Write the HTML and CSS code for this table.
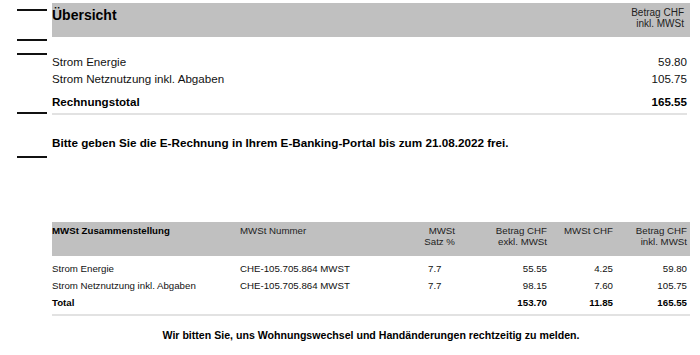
FILE: index.html
```html
<!DOCTYPE html>
<html lang="de">
<head>
<meta charset="utf-8">
<title>Übersicht</title>
<link rel="stylesheet" href="styles.css">
</head>
<body>
<div class="page">
  <div class="marks">
    <span class="mark m1"></span>
    <span class="mark m2"></span>
    <span class="mark m3"></span>
    <span class="mark m4"></span>
    <span class="mark m5"></span>
  </div>
  <main class="content">
    <section class="summary">
      <div class="summary-head">
        <h1 class="summary-title">Übersicht</h1>
        <div class="summary-col">Betrag CHF<br>inkl. MWSt</div>
      </div>
      <div class="summary-body">
        <div class="s-label">Strom Energie</div><div class="s-val">59.80</div>
        <div class="s-label">Strom Netznutzung inkl. Abgaben</div><div class="s-val">105.75</div>
        <div class="s-label s-total">Rechnungstotal</div><div class="s-val s-total">165.55</div>
      </div>
    </section>

    <p class="notice">Bitte geben Sie die E-Rechnung in Ihrem E-Banking-Portal bis zum 21.08.2022 frei.</p>

    <section class="vat">
      <div class="vat-head">
        <div class="c1 bold">MWSt Zusammenstellung</div>
        <div class="c2">MWSt Nummer</div>
        <div class="c3h">MWSt<br>Satz %</div>
        <div class="cr">Betrag CHF<br>exkl. MWSt</div>
        <div class="cr">MWSt CHF</div>
        <div class="cr">Betrag CHF<br>inkl. MWSt</div>
      </div>
      <div class="vat-body">
        <div class="c1">Strom Energie</div>
        <div class="c2">CHE-105.705.864 MWST</div>
        <div class="c3">7.7</div>
        <div class="cr">55.55</div>
        <div class="cr">4.25</div>
        <div class="cr">59.80</div>

        <div class="c1">Strom Netznutzung inkl. Abgaben</div>
        <div class="c2">CHE-105.705.864 MWST</div>
        <div class="c3">7.7</div>
        <div class="cr">98.15</div>
        <div class="cr">7.60</div>
        <div class="cr">105.75</div>

        <div class="c1 bold">Total</div>
        <div class="c2"></div>
        <div class="c3"></div>
        <div class="cr bold">153.70</div>
        <div class="cr bold">11.85</div>
        <div class="cr bold">165.55</div>
      </div>
    </section>

    <p class="footer-note">Wir bitten Sie, uns Wohnungswechsel und Handänderungen rechtzeitig zu melden.</p>
  </main>
</div>
</body>
</html>
```

FILE: styles.css
```css
* { box-sizing: border-box; }
html, body { margin: 0; padding: 0; background: #fff; }
body {
  font-family: "Liberation Sans", Arial, Helvetica, sans-serif;
  color: #111;
}
.page {
  position: relative;
  width: 700px;
  height: 355px;
  overflow: hidden;
}
.marks { position: absolute; left: 0; top: 0; width: 52px; height: 355px; }
.mark {
  position: absolute;
  left: 17px;
  width: 30px;
  height: 2px;
  background: #111;
}
.m1 { top: 9px; }
.m2 { top: 39px; }
.m3 { top: 53px; }
.m4 { top: 112px; }
.m5 { top: 156px; }

.content {
  margin-left: 52px;
  width: 638px;
  padding-top: 3px;
}

/* Summary table */
.summary-head {
  height: 34px;
  background: #c0c0c0;
  display: flex;
  justify-content: space-between;
  align-items: flex-start;
  padding: 4px 6px 0 0;
}
.summary-title {
  margin: 0;
  font-size: 14px;
  line-height: 16px;
  font-weight: bold;
  color: #000;
}
.summary-col {
  font-size: 10px;
  line-height: 11px;
  text-align: right;
  color: #222;
}
.summary-body {
  display: grid;
  grid-template-columns: 1fr auto;
  padding: 15.5px 3px 0 0;
  font-size: 11.6px;
  line-height: 17px;
}
.s-val { text-align: right; }
.s-total { font-weight: bold; color: #000; margin-top: 6px; }
.summary-body::after {
  content: "";
  grid-column: 1 / -1;
  height: 2px;
  margin-top: 3.5px;
  background: #e2e2e2;
}

.notice {
  margin: 18.5px 0 0;
  font-size: 11.7px;
  line-height: 17px;
  font-weight: bold;
  color: #000;
}

/* VAT table */
.vat { margin-top: 71.5px; font-size: 9.7px; }
.vat-head, .vat-body {
  display: grid;
  grid-template-columns: 188px 160px 55px 92px 66px 74px;
  padding-right: 3px;
}
.vat-head {
  height: 34px;
  background: #c0c0c0;
  padding-top: 3px;
  line-height: 11px;
  color: #222;
}
.vat-body {
  padding-top: 4px;
  line-height: 17px;
}
.vat-body::after {
  content: "";
  grid-column: 1 / -1;
  height: 2px;
  margin: 3px -3px 0 0;
  background: #e2e2e2;
}
.c3h { text-align: right; }
.c3 { padding-left: 28px; }
.cr { text-align: right; }
.bold { font-weight: bold; color: #000; }

.footer-note {
  margin: 11px 0 0;
  text-align: center;
  font-size: 10.6px;
  line-height: 16px;
  font-weight: bold;
  color: #000;
}
```
